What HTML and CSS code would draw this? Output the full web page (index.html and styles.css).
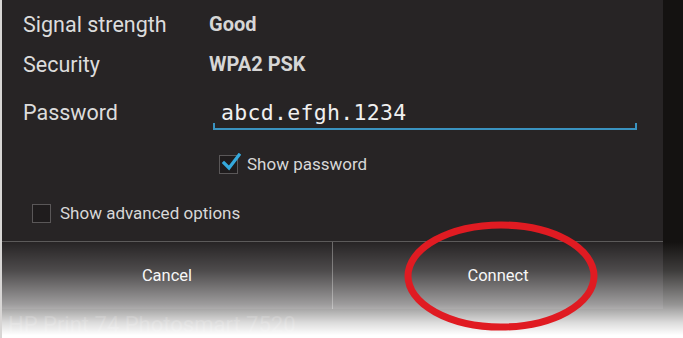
FILE: index.html
```html
<!DOCTYPE html>
<html>
<head>
<meta charset="utf-8">
<link rel="stylesheet" href="styles.css">
</head>
<body>
<div class="screen">
  <div class="dialog">
    <div class="row r1"><span class="label">Signal strength</span><span class="value">Good</span></div>
    <div class="row r2"><span class="label">Security</span><span class="value">WPA2 PSK</span></div>
    <div class="row r3"><span class="label">Password</span>
      <div class="field"><span class="pw">abcd.efgh.1234</span></div>
    </div>
    <div class="check show-pw">
      <span class="box checked"><svg width="20" height="20" viewBox="0 0 20 20"><path d="M3 10 L8 15 L18 2" fill="none" stroke="#35a9dc" stroke-width="3.2" stroke-linecap="square"/></svg></span>
      <span class="ctext">Show password</span>
    </div>
    <div class="check adv">
      <span class="box"></span>
      <span class="ctext">Show advanced options</span>
    </div>
    <div class="buttons">
      <div class="btn">Cancel</div>
      <div class="btn">Connect</div>
    </div>
  </div>
  <div class="below">HP Print 74 Photosmart 7520</div>
  <div class="fade"></div>
  <svg class="circle" width="683" height="338" viewBox="0 0 683 338"><ellipse cx="501" cy="276" rx="93" ry="51" fill="none" stroke="#e01b22" stroke-width="7"/></svg>
</div>
</body>
</html>
```
FILE: styles.css
```css
html, body { margin: 0; padding: 0; }
body { width: 683px; height: 338px; overflow: hidden; background: #141211; font-family: Roboto, "Noto Sans", sans-serif; }
.screen { position: relative; width: 683px; height: 338px; border-left: 2px solid #d8d6d5; box-sizing: border-box; }
.dialog { width: 661px; height: 309px; background: #272425; display: flex; flex-direction: column; box-sizing: border-box; }
.row { display: flex; align-items: center; color: #dcdcdc; font-size: 21.5px; }
.label { width: 186px; padding-left: 21px; }
.value { font-weight: bold; color: #d6d6d6; font-size: 20px; }
.r1 { height: 24px; margin-top: 12px; }
.r2 { height: 24px; margin-top: 16px; }
.r3 { height: 40px; margin-top: 18px; align-items: flex-start; }
.r3 .label { padding-top: 6px; }
.field { width: 424px; margin-left: 4px; height: 34px; border-bottom: 2px solid #3a93c0; position: relative; }
.field::before, .field::after { content: ""; position: absolute; bottom: 0; width: 2px; height: 5px; background: #3a93c0; }
.field::before { left: 0; }
.field::after { right: 0; }
.pw { display: block; padding-left: 8px; padding-top: 6px; font-family: "DejaVu Sans Mono", monospace; font-size: 21.5px; line-height: 25px; color: #f0f0f0; letter-spacing: 0.3px; }
.check { display: flex; align-items: center; gap: 9px; color: #d8d8d8; font-size: 17px; }
.show-pw { margin-top: 19px; margin-left: 217px; height: 22px; }
.adv { margin-top: 27px; margin-left: 30px; height: 22px; }
.box { width: 17px; height: 17px; border: 1px solid #5a5758; background: #1f1c1d; position: relative; box-sizing: content-box; }
.box svg { position: absolute; left: 1px; top: -3px; }
.buttons { margin-top: auto; height: 67px; border-top: 1px solid #5c5a5a; display: flex; }
.btn { flex: 1; display: flex; align-items: center; justify-content: center; color: #f4f4f4; font-size: 16.5px; }
.btn + .btn { border-left: 1px solid #6a6868; }
.below { color: #3a3736; font-size: 22px; line-height: 22px; padding-left: 6px; margin-top: 5px; }
.fade { position: absolute; left: 0; right: 0; top: 242px; bottom: 0; background: linear-gradient(to bottom, rgba(255,255,255,0) 0%, rgba(255,255,255,0.18) 30%, rgba(255,255,255,0.55) 65%, rgba(255,255,255,0.85) 84%, #fff 97%); pointer-events: none; }
.circle { position: absolute; left: -2px; top: 0; pointer-events: none; }
```
